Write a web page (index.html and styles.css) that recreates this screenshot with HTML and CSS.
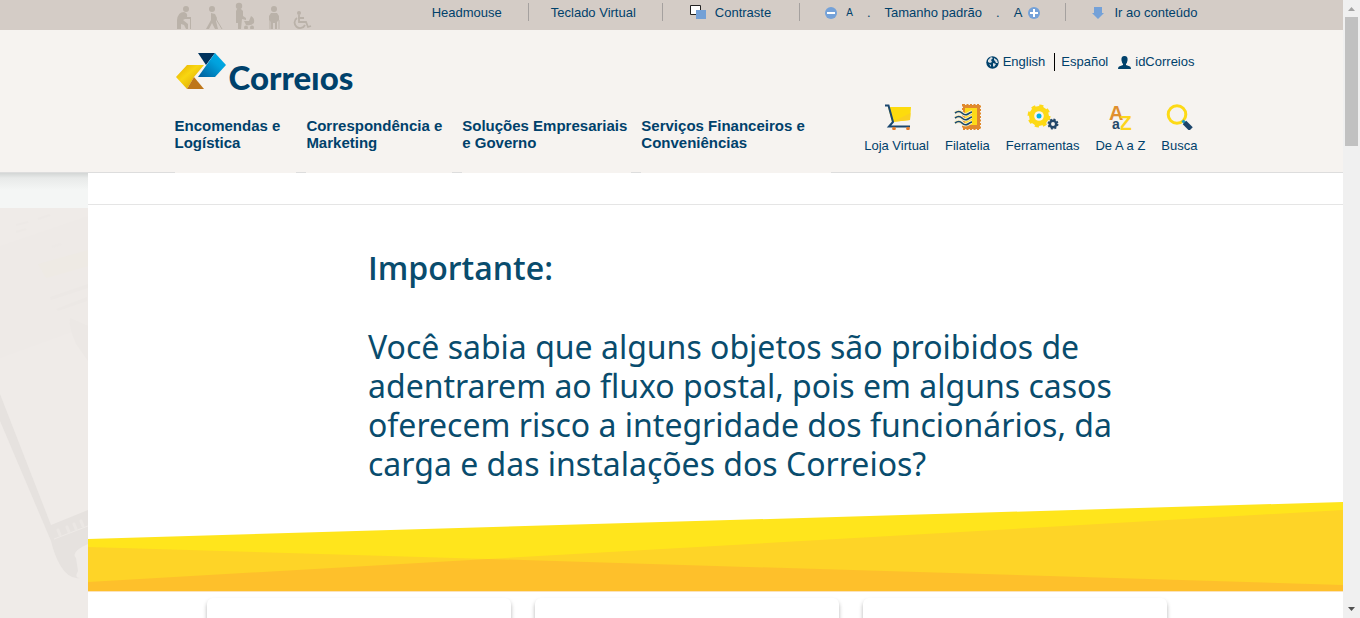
FILE: index.html
```html
<!DOCTYPE html>
<html lang="pt-BR">
<head>
<meta charset="utf-8">
<title>Correios</title>
<link rel="stylesheet" href="styles.css">
</head>
<body>
<div class="shell">
<div class="page">
  <div class="access">
    <div class="wrap access-row">
      <svg class="people" width="136" height="27" viewBox="0 -3 136 27" fill="#bab2a9" stroke="#bab2a9" stroke-width="0" aria-hidden="true">
        <circle cx="10" cy="4" r="3"/><path d="M1 24V15Q2 7 8 7Q12 8 11 12L15 12V14L9 14L7 15L12 19V24H10L8 20L5 19V24Z"/><path d="M14.500 13V24" stroke-width="1"/>
        <circle cx="36" cy="4" r="3"/><path d="M35 8L39 9L41 13L40 16L42 24H39L36 18L33 24H30L35 15Z"/><path d="M37 9L46 24" stroke-width="1"/>
        <circle cx="63" cy="1" r="3.200"/><path d="M61 4H65L67 6V11L70 13V15L66 14L65 24H62V18H60V6Z"/><path d="M68 16L73 16L75 11Q79 13 78 18Q75 21 70 20Z"/><circle cx="70" cy="22.500" r="2"/><circle cx="76" cy="22.500" r="2"/>
        <circle cx="98" cy="4" r="3"/><path d="M95 8H101L103 11V15L101 17V24H99V18H97V24H95V17L93 15V11Z"/><path d="M94 15V24M103 15V24" stroke-width="1"/>
        <circle cx="123" cy="8" r="2"/><path d="M123 10V17H130L132 22L135 21M122 13H128M121 13A5.500 5.500 0 1 0 129 20" fill="none" stroke-width="1.800"/>
      </svg>
      <ul class="tools">
        <li><a href="#">Headmouse</a></li>
        <li><a href="#">Teclado Virtual</a></li>
        <li><a href="#" class="contrast"><svg width="16" height="16" viewBox="0 0 16 16" aria-hidden="true"><path d="M.5 .5H10.500V9.500H.5Z" fill="#fff" stroke="#222"/><path d="M6 5H16V14H6Z" fill="#73a0d6"/></svg>Contraste</a></li>
        <li class="sizes">
          <a href="#" class="less"><svg width="12" height="12" viewBox="0 0 12 12" aria-hidden="true"><circle cx="6" cy="6" r="6" fill="#74a1d8"/><path d="M2 5H10V7H2Z" fill="#fff"/></svg><small>A</small></a>
          <span>.</span>
          <a href="#">Tamanho padrão</a>
          <span>.</span>
          <a href="#" class="more">A<svg width="12" height="12" viewBox="0 0 12 12" aria-hidden="true"><circle cx="6" cy="6" r="6" fill="#74a1d8"/><path d="M2 5H5V2H7V5H10V7H7V10H5V7H2Z" fill="#fff"/></svg></a>
        </li>
        <li><a href="#main" class="jump"><svg width="12" height="12" viewBox="0 0 12 12" aria-hidden="true"><path d="M2 0H10V6H12L6 12L0 6H2Z" fill="#74a1d8"/></svg>Ir ao conteúdo</a></li>
      </ul>
    </div>
  </div>

  <header class="header">
    <div class="wrap header-row">
      <div class="left">
        <a class="logo" href="#">
          <svg width="50" height="38" viewBox="0 0 50 38" aria-hidden="true">
            <defs>
              <linearGradient id="gy" x1="0" y1="0" x2="1" y2="1"><stop offset="0" stop-color="#e5a900"/><stop offset=".4" stop-color="#f8d611"/><stop offset="1" stop-color="#d59800"/></linearGradient>
              <linearGradient id="gb" x1="1" y1="0" x2="0" y2="1"><stop offset="0" stop-color="#00b0e8"/><stop offset=".4" stop-color="#00a1dd"/><stop offset="1" stop-color="#005b98"/></linearGradient>
            </defs>
            <path d="M11 13H28L18 25L11 37L0 25Z" fill="url(#gy)"/>
            <path d="M18 25L28 37H11Z" fill="#be7619"/>
            <path d="M22 1H39L30 13Z" fill="#00325d"/>
            <path d="M39 1L50 13L39 25H22Z" fill="url(#gb)"/>
          </svg>
          <span>Correıos</span>
        </a>
        <nav class="nav">
          <a href="#">Encomendas e<br>Logística</a>
          <a href="#">Correspondência e<br>Marketing</a>
          <a href="#">Soluções Empresariais<br>e Governo</a>
          <a href="#">Serviços Financeiros e<br>Conveniências</a>
        </nav>
      </div>
      <div class="right">
        <div class="langs">
          <a href="#"><svg width="13" height="13" viewBox="0 0 13 13" aria-hidden="true"><circle cx="6.500" cy="6.500" r="6.200" fill="#00416b"/><path d="M2 4L5 1L7 2L5 4L6 6L4 7L2 6ZM8 2L11 4L12 7L10 7L9 5L8 4ZM7 7L10 8L8 11L7 10ZM3 8L5 9L5 11Z" fill="#d9e0e5"/></svg>English</a>
          <a href="#" class="es">Español</a>
          <a href="#" class="id"><svg width="13" height="13" viewBox="0 0 13 13" aria-hidden="true"><path d="M6.500 0C9 0 10 2 9.500 4.500Q9 7 8 8V9L12 10.500Q13 11 13 13H0Q0 11 1 10.500L5 9V8Q4 7 3.500 4.500C3 2 4 0 6.500 0Z" fill="#00416b"/></svg>idCorreios</a>
        </div>
        <div class="short">
          <a href="#"><svg width="32" height="28" viewBox="0 0 32 28" aria-hidden="true"><path d="M7 5L30 5L29 18L11 20Z" fill="#fddb0d"/><path d="M29.500 11L29 18L11 20Z" fill="#fad020"/><path d="M4 3.500H7.500L12 20L8 24.500H29" fill="none" stroke="#1a476f" stroke-width="2"/><circle cx="13" cy="26.500" r="1.800" fill="#e4792a"/><circle cx="27" cy="26.500" r="1.800" fill="#e4792a"/></svg>Loja Virtual</a>
          <a href="#"><svg width="32" height="28" viewBox="0 0 32 28" aria-hidden="true"><path d="M12 3H29V27H12Z" fill="#e0892d" stroke="#e0892d" stroke-width="2" stroke-dasharray="2 1.500"/><path d="M14 6H26V23H14Z" fill="#fddb18"/><path d="M4 11Q8 8 11 11T17 12T21 10M4 16Q8 13 11 16T17 17T21 15M4 21Q8 18 11 21T17 22T21 20" fill="none" stroke="#f9ecc0" stroke-width="3.500"/><path d="M4 11Q8 8 11 11T17 12T21 10M4 16Q8 13 11 16T17 17T21 15M4 21Q8 18 11 21T17 22T21 20" fill="none" stroke="#17486e" stroke-width="1.600"/></svg>Filatelia</a>
          <a href="#"><svg width="32" height="28" viewBox="0 0 32 28" aria-hidden="true"><circle cx="12" cy="14" r="7" fill="none" stroke="#fdd916" stroke-width="6"/><circle cx="12" cy="14" r="10" fill="none" stroke="#fdd916" stroke-width="3" stroke-dasharray="4 3.850"/><circle cx="12" cy="14" r="4.800" fill="#f8f5ee"/><circle cx="12" cy="14" r="2.500" fill="#00b1e6"/><circle cx="26" cy="22" r="3.200" fill="none" stroke="#24486a" stroke-width="2.500"/><circle cx="26" cy="22" r="4.700" fill="none" stroke="#24486a" stroke-width="1.500" stroke-dasharray="2 1.690"/></svg>Ferramentas</a>
          <a href="#"><svg class="az" width="32" height="28" viewBox="0 0 32 28" aria-hidden="true"><g font-family="Liberation Sans, sans-serif" font-weight="700"><text x="5" y="18" font-size="20" fill="#e0902e">A</text><text x="15" y="28" font-size="21" fill="#fdd51c">Z</text><text x="8" y="27" font-size="14" fill="#24486a" stroke="#f6f3ef" stroke-width="2" paint-order="stroke">a</text></g></svg>De A a Z</a>
          <a href="#"><svg width="32" height="28" viewBox="0 0 32 28" aria-hidden="true"><circle cx="14" cy="12.500" r="8.800" fill="none" stroke="#fdda16" stroke-width="3"/><path d="M19.500 18.500L22 21" stroke="#1a9bc9" stroke-width="3"/><path d="M21.500 20.500L28 27" stroke="#1c456b" stroke-width="5"/></svg>Busca</a>
        </div>
      </div>
    </div>
  </header>

  <div class="body">
    <div class="backdrop" aria-hidden="true">
      <svg viewBox="0 0 88 410" preserveAspectRatio="xMinYMin slice">
        <path d="M0 38L88 8V118L0 150Z" fill="#eeeae7"/>
        <path d="M38 56L88 42V58L46 70Z" fill="#eeeae4"/>
        <path d="M50 89L88 76V80L51 92ZM56 101L87 89V93L58 103Z" fill="#ece8e5"/>
        <path d="M16 17L28 14M38 11L50 7M16 24L26 21M52 39L61 36" stroke="#ede9e6" stroke-width="2"/>
        <path d="M70 110Q68 118 76 136L88 153V118Z" fill="#ece8e5"/>
        <path d="M0 186L51 317L88 302V336Q70 344 76 350L78 363Q74 370 80 370Q69 372 60 357Q54 346 51 333L0 213Z" fill="#e6e2df"/>
        <path d="M54 331L88 318" stroke="#eeeae7" stroke-width="1"/>
        <path d="M58 322L60 327M67 319L69 324M74 316L76 321M81 313L83 318" stroke="#ebe7e4" stroke-width="3" stroke-linecap="round"/>
      </svg>
    </div>
    <main id="main" class="main">
      <div class="strip"></div>
      <section class="banner">
        <div class="message">
          <h1>Importante:</h1>
          <p>Você sabia que alguns objetos são proibidos de<br>adentrarem ao fluxo postal, pois em alguns casos<br>oferecem risco a integridade dos funcionários, da<br>carga e das instalações dos Correios?</p>
        </div>
        <svg class="wave" viewBox="0 0 1255 89" preserveAspectRatio="none" aria-hidden="true">
          <path d="M0 37L1255 0V89H0Z" fill="#ffe51c"/>
          <path d="M0 45L400 57L1255 8V89H0Z" fill="#fed427"/>
          <path d="M0 80L400 57L1255 83V89H0Z" fill="#fec02b"/>
        </svg>
      </section>
      <div class="cards"><article class="card"></article><article class="card"></article><article class="card"></article></div>
    </main>
  </div>
</div>
<div class="scroll" aria-hidden="true">
  <svg width="17" height="17" viewBox="0 0 17 17"><path d="M5 11L8.500 7L12 11Z" fill="#a3a3a3"/></svg>
  <div class="thumb"></div>
  <svg width="17" height="17" viewBox="0 0 17 17"><path d="M5 6H12L8.500 10Z" fill="#505050"/></svg>
</div>
</div>
</body>
</html>
```

FILE: styles.css
```css
* { box-sizing: border-box; }
body {
  margin: 0;
  font: 13px/16px "Liberation Sans", Arial, sans-serif;
  color: #00416b;
  background: #fff;
}
a { color: inherit; text-decoration: none; }
ul { list-style: none; margin: 0; padding: 0; }
svg { display: block; flex: none; }

.shell { display: grid; grid-template-columns: minmax(0, 1fr) 17px; height: 100vh; }
.page { display: flex; flex-direction: column; overflow: hidden; }
.wrap { max-width: 1054px; margin: 0 auto; padding: 0 1px 0 30px; display: flex; justify-content: space-between; }

.access { background: #d4ccc6; }
.access-row { height: 30px; align-items: flex-start; }
.people { margin: 2px 0 0 1px; }
.tools { display: flex; padding-top: 3px; }
.tools li { display: flex; align-items: center; height: 18px; padding: 2px 26px 0 22px; border-right: 1px solid #a5a19f; white-space: nowrap; }
.tools li:last-child { border: 0; padding: 2px 0 0 26px; }
.tools li:nth-child(3) { padding: 2px 28px 0 27px; }
.tools .sizes { padding: 2px 25px 0 25px; gap: 14px; }
.tools a { display: flex; align-items: center; }
.contrast, .less { gap: 9px; }
.more { gap: 6px; }
.jump { gap: 10px; }
.tools small { font-size: 10px; }

.header { background: #f6f3f0; border-bottom: 1px solid #ddd; }
.header-row { height: 142px; }
.left { display: flex; flex-direction: column; padding-top: 22px; }
.logo { display: flex; gap: 3px; height: 43px; padding-left: 1px; font: 900 33px/44px Lato, sans-serif; }
.logo span { padding-top: 3px; }
.nav { display: flex; flex: 1; gap: 10px; margin-bottom: -1px; font-size: 15px; line-height: 17px; font-weight: 700; white-space: nowrap; }
.nav a { background: #f6f3f0; padding: 22px 4px 0 0; }
.nav a:nth-child(1) { padding-right: 16px; }
.nav a:nth-child(2) { padding-right: 10px; }
.nav a:nth-child(4) { padding-right: 26px; }
.right { display: flex; flex-direction: column; align-items: flex-end; padding-top: 23px; }
.langs { display: flex; padding-right: 3px; }
.langs a { display: flex; align-items: center; gap: 4px; height: 18px; }
.langs .es { border-left: 1px solid #000; margin-left: 9px; padding-left: 6px; }
.langs .id { margin-left: 10px; }
.short { display: flex; gap: 16px; margin-top: 31px; }
.short a { display: flex; flex-direction: column; align-items: center; gap: 8px; }
.az { overflow: visible; }

.body { display: grid; grid-template-columns: 88px minmax(0, 1fr); flex: 1; min-height: 0; }
.backdrop { background: #efebe8; overflow: hidden; }
.backdrop::before { content: ""; display: block; height: 35px; background: linear-gradient(#d3d6d5, #e8eae9 5px, #f4f6f5 17px); }
.backdrop svg { width: 100%; }
.main { background: #fff; min-height: 0; overflow: hidden; }
.strip { height: 32px; border-bottom: 1px solid #e5e5e5; }
.message { padding: 43px 40px 19px 280px; color: #094c6d; font: 32px/39px "Noto Sans", sans-serif; white-space: nowrap; }
.message h1 { margin: 0 0 39px; font: 600 32px/40px "Open Sans", sans-serif; }
.message p { margin: 0; }
.wave { width: 100%; height: 89px; }
.banner { border-bottom: 1px solid #fbe2bb; }
.cards { display: grid; grid-template-columns: repeat(3, minmax(0, 1fr)); gap: 24px; padding: 6px 176px 0 119px; }
.card { height: 200px; border-radius: 6px; background: #fff; box-shadow: 0 3px 4px rgba(0, 0, 0, .3); }

.scroll { display: flex; flex-direction: column; background: #f0f0f0; }
.thumb { height: 129px; margin: 0 2px auto; background: #c1c1c1; }
```
